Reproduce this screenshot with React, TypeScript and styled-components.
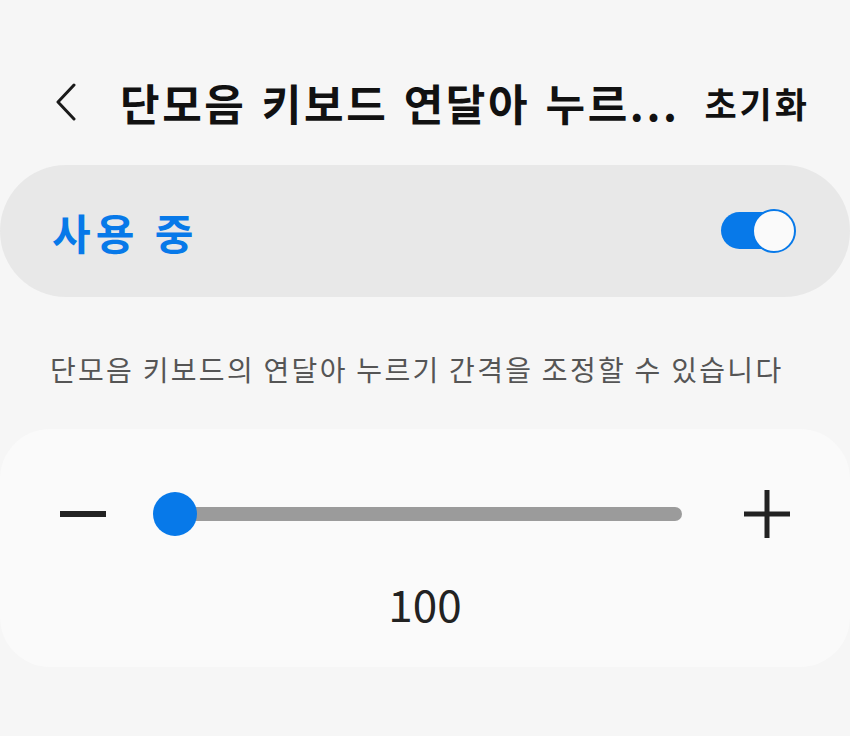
import React, { useState } from "react";
import styled, { createGlobalStyle } from "styled-components";

const GlobalStyle = createGlobalStyle`
  html, body {
    margin: 0;
    padding: 0;
    background-color: #f6f6f6;
  }
  body {
    font-family: "Noto Sans CJK KR", "Noto Sans", sans-serif;
  }
`;

const BLUE = "#0779e9";

const App: React.FC = () => {
  const [enabled, setEnabled] = useState<boolean>(true);
  const [value, setValue] = useState<number>(100);

  return (
    <Page>
      <GlobalStyle />
      <Header>
        <BackButton aria-label="back">
          <svg width="24" height="38" viewBox="0 0 24 38">
            <polyline
              points="20,2 4,19 20,36"
              fill="none"
              stroke="#1a1a1a"
              strokeWidth="3"
              strokeLinecap="round"
              strokeLinejoin="round"
            />
          </svg>
        </BackButton>
        <Title>단모음 키보드 연달아 누르...</Title>
        <ResetButton onClick={() => setValue(100)}>초기화</ResetButton>
      </Header>

      <SwitchCard>
        <SwitchLabel>사용 중</SwitchLabel>
        <Toggle on={enabled} onClick={() => setEnabled(!enabled)}>
          <Knob on={enabled} />
        </Toggle>
      </SwitchCard>

      <Description>
        단모음 키보드의 연달아 누르기 간격을 조정할 수 있습니다
      </Description>

      <SliderCard>
        <SliderRow>
          <StepButton aria-label="minus" onClick={() => setValue(value - 50)}>
            <svg width="46" height="46" viewBox="0 0 46 46">
              <rect x="0" y="20" width="46" height="6" fill="#222" />
            </svg>
          </StepButton>
          <Track>
            <Thumb />
          </Track>
          <StepButton aria-label="plus" onClick={() => setValue(value + 50)}>
            <svg width="46" height="48" viewBox="0 0 46 48">
              <rect x="0" y="21.5" width="46" height="5" fill="#222" />
              <rect x="20.5" y="0" width="5" height="48" fill="#222" />
            </svg>
          </StepButton>
        </SliderRow>
        <Value>{value}</Value>
      </SliderCard>
    </Page>
  );
};

const Page = styled.div`
  width: 850px;
  min-height: 736px;
  padding-top: 60px;
  box-sizing: border-box;
`;

const Header = styled.div`
  display: flex;
  align-items: center;
  height: 84px;
  padding: 0 40px 0 52px;
`;

const BackButton = styled.div`
  display: flex;
  align-items: center;
  width: 66px;
  height: 40px;
  padding-left: 2px;
`;

const Title = styled.h1`
  flex: 1;
  margin: 0;
  font-size: 43px;
  font-weight: 700;
  color: #111;
  white-space: nowrap;
  letter-spacing: 2.6px;
  word-spacing: 3px;
`;

const ResetButton = styled.button`
  border: none;
  background: transparent;
  padding: 0;
  font-family: "Noto Sans CJK KR", sans-serif;
  font-size: 35px;
  font-weight: 700;
  color: #111;
  letter-spacing: 3px;
  cursor: pointer;
`;

const SwitchCard = styled.div`
  display: flex;
  align-items: center;
  justify-content: space-between;
  height: 132px;
  margin-top: 21px;
  padding: 0 55px 0 52px;
  border-radius: 66px;
  background-color: #e8e8e8;
`;

const SwitchLabel = styled.span`
  font-size: 42px;
  font-weight: 700;
  color: ${BLUE};
  letter-spacing: 5px;
  word-spacing: 1px;
`;

const Toggle = styled.div<{ on: boolean }>`
  position: relative;
  width: 74px;
  height: 44px;
  cursor: pointer;

  &::before {
    content: "";
    position: absolute;
    left: 0;
    top: 3px;
    width: 60px;
    height: 37px;
    border-radius: 19px;
    background-color: ${({ on }) => (on ? BLUE : "#aaa")};
  }
`;

const Knob = styled.div<{ on: boolean }>`
  position: absolute;
  top: 0;
  left: ${({ on }) => (on ? "31px" : "0")};
  width: 40px;
  height: 40px;
  border-radius: 50%;
  border: 2px solid ${({ on }) => (on ? BLUE : "#aaa")};
  background-color: #fafafa;
`;

const Description = styled.p`
  margin: 52px 0 0;
  padding-left: 50px;
  font-size: 28px;
  color: #555;
  line-height: 40px;
  letter-spacing: 2.3px;
`;

const SliderCard = styled.div`
  display: flex;
  flex-direction: column;
  align-items: center;
  height: 238px;
  margin-top: 40px;
  border-radius: 50px;
  background-color: #fafafa;
  box-sizing: border-box;
  padding-top: 61px;
`;

const SliderRow = styled.div`
  display: flex;
  align-items: center;
  width: 100%;
  box-sizing: border-box;
  padding: 0 60px;
  height: 48px;
`;

const StepButton = styled.div`
  display: flex;
  align-items: center;
  cursor: pointer;
`;

const Track = styled.div`
  position: relative;
  flex: 1;
  height: 14px;
  margin: 0 62px 0 69px;
  border-radius: 7px;
  background-color: #9b9b9b;
`;

const Thumb = styled.div`
  position: absolute;
  top: 50%;
  left: -22px;
  width: 44px;
  height: 44px;
  margin-top: -22px;
  border-radius: 50%;
  background-color: ${BLUE};
`;

const Value = styled.div`
  margin-top: 35px;
  font-size: 44px;
  font-weight: 400;
  color: #222;
  line-height: 60px;
`;

export default App;
